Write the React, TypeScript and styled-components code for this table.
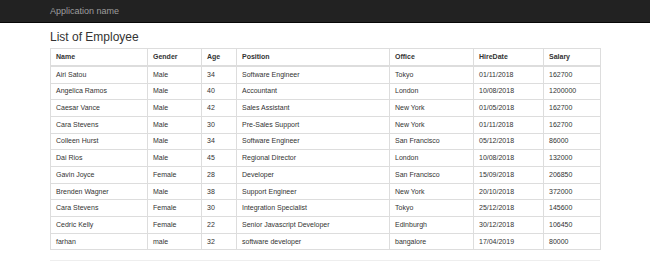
import styled, { createGlobalStyle } from "styled-components";

type Employee = {
  name: string;
  gender: string;
  age: number;
  position: string;
  office: string;
  hireDate: string;
  salary: number;
};

const employees: Employee[] = [
  { name: "Airi Satou", gender: "Male", age: 34, position: "Software Engineer", office: "Tokyo", hireDate: "01/11/2018", salary: 162700 },
  { name: "Angelica Ramos", gender: "Male", age: 40, position: "Accountant", office: "London", hireDate: "10/08/2018", salary: 1200000 },
  { name: "Caesar Vance", gender: "Male", age: 42, position: "Sales Assistant", office: "New York", hireDate: "01/05/2018", salary: 162700 },
  { name: "Cara Stevens", gender: "Male", age: 30, position: "Pre-Sales Support", office: "New York", hireDate: "01/11/2018", salary: 162700 },
  { name: "Colleen Hurst", gender: "Male", age: 34, position: "Software Engineer", office: "San Francisco", hireDate: "05/12/2018", salary: 86000 },
  { name: "Dai Rios", gender: "Male", age: 45, position: "Regional Director", office: "London", hireDate: "10/08/2018", salary: 132000 },
  { name: "Gavin Joyce", gender: "Female", age: 28, position: "Developer", office: "San Francisco", hireDate: "15/09/2018", salary: 206850 },
  { name: "Brenden Wagner", gender: "Male", age: 38, position: "Support Engineer", office: "New York", hireDate: "20/10/2018", salary: 372000 },
  { name: "Cara Stevens", gender: "Female", age: 30, position: "Integration Specialist", office: "Tokyo", hireDate: "25/12/2018", salary: 145600 },
  { name: "Cedric Kelly", gender: "Female", age: 22, position: "Senior Javascript Developer", office: "Edinburgh", hireDate: "30/12/2018", salary: 106450 },
  { name: "farhan", gender: "male", age: 32, position: "software developer", office: "bangalore", hireDate: "17/04/2019", salary: 80000 },
];

const columns = [
  { label: "Name", width: 97 },
  { label: "Gender", width: 54 },
  { label: "Age", width: 35 },
  { label: "Position", width: 153 },
  { label: "Office", width: 84 },
  { label: "HireDate", width: 70 },
  { label: "Salary", width: 57 },
];

const GlobalStyle = createGlobalStyle`
  body {
    margin: 0;
    background: #fff;
    font-family: "Liberation Sans", Arial, sans-serif;
    color: #333;
  }
`;

const Navbar = styled.div`
  height: 22px;
  background-color: #222;
  border-bottom: 1px solid #080808;
`;

const NavInner = styled.div`
  width: 550px;
  margin: 0 auto;
  height: 100%;
  display: flex;
  align-items: center;
`;

const Brand = styled.div`
  font-size: 9px;
  color: #9d9d9d;
`;

const Container = styled.div`
  width: 550px;
  margin: 0 auto;
`;

const Title = styled.h3`
  font-size: 12px;
  font-weight: 500;
  line-height: 1.1;
  margin: 8px 0 4px;
`;

const Table = styled.table`
  width: 550px;
  border-collapse: collapse;
  table-layout: fixed;
  border: 1px solid #ddd;
  font-size: 7px;
`;

const Col = styled.col<{ $w: number }>`
  width: ${(p) => p.$w}px;
`;

const HeadCell = styled.th`
  text-align: left;
  font-weight: bold;
  padding: 3.85px 5px;
  line-height: 8px;
  border: 1px solid #ddd;
  border-bottom: 2px solid #ddd;
`;

const Cell = styled.td`
  padding: 3.85px 5px;
  line-height: 8px;
  border: 1px solid #ddd;
  white-space: nowrap;
  overflow: hidden;
`;

const Rule = styled.hr`
  margin: 10px 0 0;
  border: 0;
  border-top: 1px solid #eee;
`;

export default function App() {
  return (
    <>
      <GlobalStyle />
      <Navbar>
        <NavInner>
          <Brand>Application name</Brand>
        </NavInner>
      </Navbar>
      <Container>
        <Title>List of Employee</Title>
        <Table>
          <colgroup>
            {columns.map((c) => (
              <Col key={c.label} $w={c.width} />
            ))}
          </colgroup>
          <thead>
            <tr>
              {columns.map((c) => (
                <HeadCell key={c.label}>{c.label}</HeadCell>
              ))}
            </tr>
          </thead>
          <tbody>
            {employees.map((e, i) => (
              <tr key={i}>
                <Cell>{e.name}</Cell>
                <Cell>{e.gender}</Cell>
                <Cell>{e.age}</Cell>
                <Cell>{e.position}</Cell>
                <Cell>{e.office}</Cell>
                <Cell>{e.hireDate}</Cell>
                <Cell>{e.salary}</Cell>
              </tr>
            ))}
          </tbody>
        </Table>
        <Rule />
      </Container>
    </>
  );
}
